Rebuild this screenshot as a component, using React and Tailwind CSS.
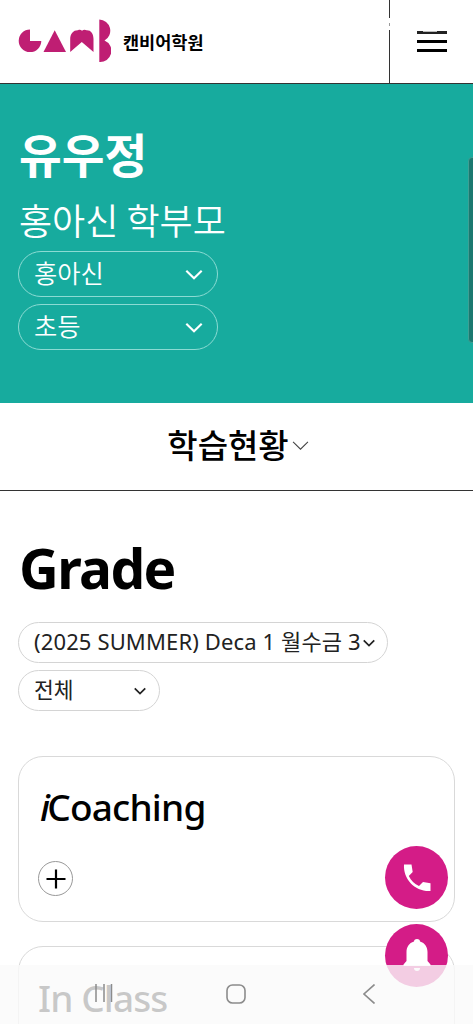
import { useState } from 'react';

const Chevron = ({ className, width = 2 }) => (
  <svg viewBox="0 0 16 10" fill="none" className={className}>
    <path d="M1 1.5 8 8.5 15 1.5" stroke="currentColor" strokeWidth={width} />
  </svg>
);

const Logo = () => (
  <svg viewBox="0 0 93 44" className="w-[93px] h-[44px] shrink-0" fill="#bf1e73">
    <path d="M12 10.5A11.3 11.3 0 1 0 23.3 22H12Z" />
    <path d="M36.7 11.2 48 33H25.5Z" />
    <path d="M52.2 33V20C52.2 14.5 55.5 11 60 11.2C61.5 10.4 63 10.7 64 11.7C65.5 10.5 67 10.4 68.5 11.2C73 11 75.5 14.5 75.5 20V33L63.8 23Z" />
    <path d="M81.3 0.5A11.2 11.2 0 0 1 86.5 21.5A11.2 11.2 0 0 1 81.3 43Z" />
  </svg>
);

const Header = () => (
  <header className="flex h-[84px] border-b border-[#333] bg-white">
    <div className="flex flex-1 items-center pl-[18px] pb-[1px]">
      <Logo />
      <span className="ml-[12px] mt-[2px] text-[17.5px] font-bold whitespace-nowrap">캔비어학원</span>
    </div>
    <div className="relative flex w-[84px] flex-col border-l border-[#333] pl-[27px] pt-[31px] gap-[6px]">
      <div className="absolute top-[18px] -left-[2px] h-[12px] w-[3px] bg-white">
        <div className="mt-[5px] ml-[1px] h-[3px] w-[1px] bg-[#999]"></div>
      </div>
      <div className="flex h-[3px] w-[30px] bg-[#222]">
        <div className="ml-[6px] h-[1px] w-[14px] bg-[#bbb]"></div>
      </div>
      <div className="h-[3px] w-[30px] bg-black"></div>
      <div className="h-[3px] w-[30px] bg-black"></div>
    </div>
  </header>
);

const ProfileSelect = ({ label }) => (
  <button className="flex h-[46px] w-[200px] items-center justify-between rounded-full border border-[#8bdbd3] pl-[15px] pr-[14px] text-[25.3px] font-[350] leading-none">
    <span className="-mt-[3px]">{label}</span>
    <Chevron className="w-[18px] h-[11px]" width={1.9} />
  </button>
);

const Profile = () => (
  <section className="h-[319px] bg-[#17ab9e] px-[18px] pt-[39px] text-white">
    <h1 className="h-[60px] pl-[1px] text-[46.5px] font-bold leading-[60px]">유우정</h1>
    <p className="h-[68px] pl-[1px] text-[36px] font-[350] leading-[73px] whitespace-nowrap">홍아신 학부모</p>
    <div className="flex flex-col gap-[7px]">
      <ProfileSelect label="홍아신" />
      <ProfileSelect label="초등" />
    </div>
  </section>
);

const GradeCard = ({ children }) => (
  <div className="h-[166px] rounded-[25px] border border-[#d9d9d9] px-[19px]">{children}</div>
);

const PhoneIcon = () => (
  <svg viewBox="0 0 28 28" className="w-[28px] h-[28px]" fill="white">
    <path d="M1 0.5H8.5L9.7 8L5.8 12C8 16.5 11.5 20 16 22L20 18L27.5 19.3V27C12.5 28 0 15.5 1 0.5Z" />
  </svg>
);

const BellIcon = () => (
  <svg viewBox="0 0 28 33" className="w-[28px] h-[33px]" fill="white">
    <path d="M14 0C12 0 11 1.3 11 2.5C6 4 3.5 8 3.5 13V22L0.5 25.5V27H27.5V25.5L24.5 22V13C24.5 8 22 4 17 2.5C17 1.3 16 0 14 0Z" />
    <path d="M11 29H17A3 3 0 0 1 11 29Z" />
  </svg>
);

const SystemBar = () => (
  <nav className="absolute bottom-0 left-0 flex h-[59px] w-full bg-[#fafafa]/80 text-[#8c8c8c]">
    <svg viewBox="0 0 20 20" className="ml-[94px] mt-[18px] w-[20px] h-[20px]" fill="none" stroke="currentColor" strokeWidth="1.5">
      <path d="M2 1V19M10 1V19M17.5 1V19" />
    </svg>
    <svg viewBox="0 0 20 20" className="ml-[112px] mt-[19px] w-[20px] h-[20px]" fill="none" stroke="currentColor" strokeWidth="1.6">
      <rect x="1" y="1" width="18" height="18" rx="5.5" />
    </svg>
    <svg viewBox="0 0 12 20" className="ml-[117px] mt-[19px] w-[12px] h-[20px]" fill="none" stroke="currentColor" strokeWidth="1.6">
      <path d="M11.5 0.5 1 10 11.5 19.5" />
    </svg>
  </nav>
);

const App = () => {
  const [expanded, setExpanded] = useState(false);

  return (
    <div className="relative h-[1024px] w-full overflow-hidden bg-white text-black font-['Noto_Sans_CJK_KR',sans-serif]">
      <Header />
      <Profile />

      {/* Section menu */}
      <div className="flex h-[88px] items-center justify-center border-b border-[#333] pl-[3px] pb-[4px]">
        <span className="text-[33px] font-medium leading-none">학습현황</span>
        <Chevron className="ml-[3px] mt-[2px] w-[17px] h-[11px] text-[#444]" width={1} />
      </div>

      <main className="px-[18px] pt-[41px]">
        <h2 className="h-[90px] pl-[1px] text-[55px] font-bold leading-[72px] tracking-[-1.6px] font-['Noto_Sans',sans-serif]">Grade</h2>
        <div className="flex flex-col items-start gap-[7px]">
          <button className="flex h-[41px] w-[370px] items-center rounded-full border border-[#d4d4d4] pl-[15px] text-left text-[22px] leading-none text-[#222] whitespace-nowrap">
            <span className="w-[329px] -mt-[3px] tracking-[0.13px] font-normal font-['Noto_Sans','Noto_Sans_CJK_KR',sans-serif]">(2025 SUMMER) Deca 1 월수금 3</span>
            <Chevron className="w-[12px] h-[8px]" width={2.3} />
          </button>
          <button className="flex h-[41px] w-[142px] items-center justify-between rounded-full border border-[#d4d4d4] pl-[15px] pr-[13px] text-[21.5px] leading-none text-[#222]">
            <span className="-mt-[4px] font-normal">전체</span>
            <Chevron className="w-[12px] h-[8px]" width={2.3} />
          </button>
        </div>

        {/* Grade cards */}
        <div className="mt-[45px] flex flex-col gap-[24px]">
          <GradeCard>
            <h3 className="h-[104px] pt-[24px] pl-[2px] text-[37px] font-medium leading-[51px] tracking-[-0.8px] font-['Noto_Sans',sans-serif]">
              <i className="-mr-[2px]">i</i>Coaching
            </h3>
            <button
              onClick={() => setExpanded(!expanded)}
              aria-expanded={expanded}
              className="flex h-[35px] w-[35px] items-center justify-center rounded-full border border-[#999]"
            >
              <svg viewBox="0 0 20 20" className="w-[20px] h-[20px]" stroke="black" strokeWidth="2.2">
                <path d="M0.5 10H19.5M10 0.5V19.5" />
              </svg>
            </button>
          </GradeCard>
          <GradeCard>
            <h3 className="pt-[24px] text-[37px] font-medium leading-[53px] tracking-[-0.9px] font-['Noto_Sans',sans-serif]">In Class</h3>
          </GradeCard>
        </div>
      </main>

      {/* Floating buttons */}
      <div className="absolute top-[846px] left-[385px] flex flex-col gap-[15px]">
        <button className="flex h-[63px] w-[63px] items-center justify-center rounded-full bg-[#d41c87]">
          <PhoneIcon />
        </button>
        <button className="flex h-[63px] w-[63px] items-center justify-center rounded-full bg-[#d41c87]">
          <BellIcon />
        </button>
      </div>

      <SystemBar />
      <div className="absolute top-[157px] -right-[4px] h-[186px] w-[9px] rounded-[4px] border border-[#3f9f94] bg-[#1b7970]"></div>
    </div>
  );
};

export default App;
